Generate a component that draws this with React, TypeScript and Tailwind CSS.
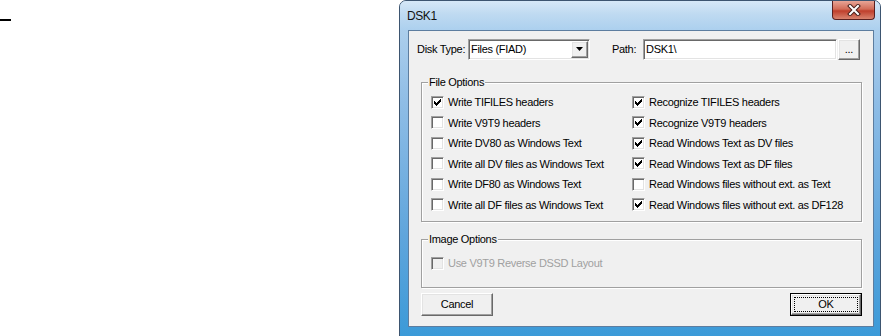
const sunken =
  "border border-t-[#a0a0a0] border-l-[#a0a0a0] border-r-white border-b-white shadow-[inset_1px_1px_0_#696969,inset_-1px_-1px_0_#e3e3e3]";
const raised =
  "border border-t-white border-l-white border-r-[#696969] border-b-[#696969] shadow-[inset_-1px_-1px_0_#a0a0a0,inset_1px_1px_0_#e3e3e3] bg-[#f0f0f0]";

function Box({ checked, disabled }: { checked?: boolean; disabled?: boolean }) {
  return (
    <span
      className={`w-[13px] h-[13px] shrink-0 flex items-center justify-center ${sunken} ${
        disabled ? "bg-[#f0f0f0]" : "bg-white"
      }`}
    >
      {checked && (
        <svg width="7" height="7" viewBox="0 0 7 7" shapeRendering="crispEdges">
          <path
            d="M0 2h1v3H0z M1 3h1v3H1z M2 4h1v3H2z M3 3h1v3H3z M4 2h1v3H4z M5 1h1v3H5z M6 0h1v3H6z"
            fill="#000"
          />
        </svg>
      )}
    </span>
  );
}

function Option({ label, checked, disabled }: { label: string; checked?: boolean; disabled?: boolean }) {
  return (
    <div className="h-[20.5px] flex items-center gap-[4px]">
      <Box checked={checked} disabled={disabled} />
      <span className={`whitespace-nowrap ${disabled ? "text-[#a0a0a0]" : ""}`}>{label}</span>
    </div>
  );
}

function Group({ title, className, children }: { title: string; className: string; children: React.ReactNode }) {
  return (
    <div
      className={`relative border border-[#a0a0a0] shadow-[inset_1px_1px_0_#fff,1px_1px_0_#fff] ${className}`}
    >
      <span className="absolute -top-[8px] left-[6px] px-[1px] bg-[#f0f0f0] leading-[14px]">{title}</span>
      {children}
    </div>
  );
}

const left = [
  { label: "Write TIFILES headers", checked: true },
  { label: "Write V9T9 headers" },
  { label: "Write DV80 as Windows Text" },
  { label: "Write all DV files as Windows Text" },
  { label: "Write DF80 as Windows Text" },
  { label: "Write all DF files as Windows Text" },
];

const right = [
  { label: "Recognize TIFILES headers", checked: true },
  { label: "Recognize V9T9 headers", checked: true },
  { label: "Read Windows Text as DV files", checked: true },
  { label: "Read Windows Text as DF files", checked: true },
  { label: "Read Windows files without ext. as Text" },
  { label: "Read Windows files without ext. as DF128", checked: true },
];

export default function App() {
  return (
    <div className="flex w-[882px] h-[336px] overflow-hidden bg-white text-black font-['Liberation_Sans',Arial,sans-serif] text-[11px] tracking-[-0.3px]">
      <div className="w-[399px] shrink-0">
        <div className="mt-[19px] w-[11px] h-[2px] bg-black" />
      </div>

      {/* window frame */}
      <div className="w-[482px] h-[338px] shrink-0 flex flex-col rounded-t-[7px] border border-[#3d5570] bg-[linear-gradient(180deg,#b9d6ef_0%,#8fbde6_30%,#5fa5dc_70%,#3b9ad8_100%)]">
        <div className="h-[29px] shrink-0 flex justify-between pl-[7px] pr-[5px] rounded-t-[6px] bg-[linear-gradient(180deg,#d6e8f7_0%,#bfdaf1_45%,#acd0ee_100%)]">
          <span className="self-center text-[12px] tracking-[-0.4px] text-[#111] font-['Liberation_Sans',sans-serif]">
            DSK1
          </span>
          <div className="w-[43px] h-[19px] rounded-b-[4px] border border-t-0 border-[#5a2020] bg-[linear-gradient(180deg,#e8a596_0%,#d26c58_45%,#bf3f2c_55%,#d9846f_100%)] flex items-center justify-center">
            <svg width="14" height="12" viewBox="0 0 14 12">
              <path d="M3 2l8 8M11 2l-8 8" stroke="#47201c" strokeWidth="4" strokeLinecap="square" />
              <path d="M3 2l8 8M11 2l-8 8" stroke="#fff" strokeWidth="2" strokeLinecap="square" />
            </svg>
          </div>
        </div>

        {/* client area */}
        <div className="ml-[8px] mr-[6px] h-[297px] shrink-0 border border-[#5d7d9f] bg-[#f0f0f0] flex flex-col">
          <div className="pt-[7px] pl-[8px] flex items-center h-[29px] box-border">
            <span className="w-[51px] whitespace-nowrap">Disk Type:</span>
            <div className={`w-[122px] h-[21px] flex items-center bg-white ${sunken}`}>
              <span className="flex-1 pl-[2px]">Files (FIAD)</span>
              <span className={`w-[17px] h-[17px] mr-[1px] flex items-center justify-center ${raised}`}>
                <svg width="7" height="4" viewBox="0 0 7 4">
                  <path d="M0 0h7L3.5 4z" fill="#000" />
                </svg>
              </span>
            </div>
            <span className="ml-[22px] w-[31px]">Path:</span>
            <div className={`w-[194px] h-[21px] flex items-center bg-white pl-[2px] ${sunken}`}>DSK1\</div>
            <div className={`ml-[1px] w-[22px] h-[21px] flex items-center justify-center leading-none ${raised}`}>
              ...
            </div>
          </div>

          <div className="pl-[12px] pr-[11px] flex flex-col">
            <Group title="File Options" className="mt-[22px] h-[140px] pt-[9px] pl-[9px]">
              <div className="grid grid-cols-[201px_1fr]">
                <div className="flex flex-col">
                  {left.map((o) => (
                    <Option key={o.label} label={o.label} checked={o.checked} />
                  ))}
                </div>
                <div className="flex flex-col">
                  {right.map((o) => (
                    <Option key={o.label} label={o.label} checked={o.checked} />
                  ))}
                </div>
              </div>
            </Group>

            <Group title="Image Options" className="mt-[17px] h-[49px] pt-[13px] pl-[9px]">
              <Option label="Use V9T9 Reverse DSSD Layout" disabled />
            </Group>

            <div className="mt-[5px] flex justify-between">
              <button className={`w-[72px] h-[23px] text-[11px] ${raised}`}>Cancel</button>
              <button className="w-[72px] h-[23px] border border-black flex">
                <span className={`flex-1 flex ${raised}`}>
                  <span className="flex-1 m-[2px] border border-dotted border-black flex items-center justify-center text-[11px]">
                    OK
                  </span>
                </span>
              </button>
            </div>
          </div>
        </div>
      </div>
    </div>
  );
}
